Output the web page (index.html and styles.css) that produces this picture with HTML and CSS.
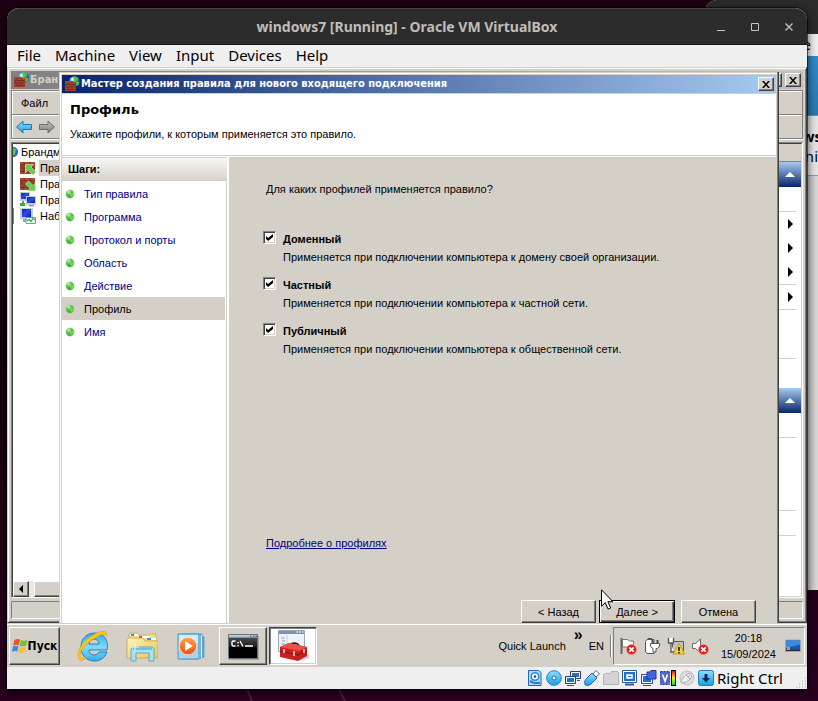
FILE: index.html
```html
<!DOCTYPE html>
<html lang="ru">
<head>
<meta charset="utf-8">
<title>windows7 [Running] - Oracle VM VirtualBox</title>
<link rel="stylesheet" href="styles.css">
</head>
<body>
<svg class="defs" aria-hidden="true">
  <defs>
    <radialGradient id="globe" cx=".35" cy=".3" r=".8"><stop offset="0" stop-color="#b8ecff"/><stop offset=".5" stop-color="#2484e0"/><stop offset="1" stop-color="#063a94"/></radialGradient>
    <radialGradient id="dot" cx=".35" cy=".25" r=".8"><stop offset="0" stop-color="#c8f4b8"/><stop offset=".45" stop-color="#50c03c"/><stop offset="1" stop-color="#2c9a28"/></radialGradient>
    <linearGradient id="screen" x1="0" y1="0" x2="1" y2="1"><stop offset="0" stop-color="#0c1cb0"/><stop offset=".5" stop-color="#2850e8"/><stop offset="1" stop-color="#0818a0"/></linearGradient>
    <linearGradient id="sky" x1="0" y1="0" x2="0" y2="1"><stop offset="0" stop-color="#8fe0fb"/><stop offset="1" stop-color="#1b9be8"/></linearGradient>
    <linearGradient id="ie" x1="0" y1="0" x2="0" y2="1"><stop offset="0" stop-color="#2eaae8"/><stop offset=".5" stop-color="#7fdcfc"/><stop offset="1" stop-color="#35aee9"/></linearGradient>
    <linearGradient id="folder" x1="0" y1="0" x2="1" y2="1"><stop offset="0" stop-color="#fff3b8"/><stop offset="1" stop-color="#e6c65c"/></linearGradient>
    <linearGradient id="orange" x1="0" y1="0" x2="0" y2="1"><stop offset="0" stop-color="#ffa04a"/><stop offset="1" stop-color="#e8500a"/></linearGradient>
    <linearGradient id="steel" x1="0" y1="0" x2="0" y2="1"><stop offset="0" stop-color="#c4c4c4"/><stop offset="1" stop-color="#7c7c7c"/></linearGradient>
    <linearGradient id="meter" x1="0" y1="0" x2="0" y2="1"><stop offset="0" stop-color="#f01010"/><stop offset=".5" stop-color="#f8f020"/><stop offset="1" stop-color="#18d030"/></linearGradient>
    <linearGradient id="console" x1="0" y1="0" x2="0" y2="1"><stop offset="0" stop-color="#5c5c5c"/><stop offset=".5" stop-color="#1c1c1c"/><stop offset=".55" stop-color="#000"/></linearGradient>
    <symbol id="firewall" viewBox="0 0 16 16">
      <circle cx="10.500" cy="5.500" r="5.300" fill="url(#globe)"/>
      <path d="M9 1c2-1 5 0 5 2l-3 3-2-2zM12 6l3.500 0-1 3-2 1z" fill="#55c436"/>
      <path d="M7 2.500l2-1 1 2-2 2z" fill="#e8fcff"/>
      <path d="M1 5h8v1h3v9H1z" fill="#a8442e"/>
      <path d="M1 8.500h11M1 11h11M1 13.500h11M4 6v2.500M8 6v2.500M2.500 8.500V11M6 8.500V11M10 8.500V11M4 11v2.500M8 11v2.500M6 13.500V15" stroke="#6c281c" stroke-width=".7"/>
    </symbol>
    <symbol id="brick" viewBox="0 0 16 16">
      <path d="M0 2h15v12H0z" fill="#ac4c34"/>
      <path d="M0 5h15M0 8h15M0 11h15M4 2v3M10 2v3M2 5v3M7 5v3M12 5v3M4 8v3M10 8v3M3 11v3M8 11v3" stroke="#6c2a1c" stroke-width=".8"/>
    </symbol>
    <symbol id="error" viewBox="0 0 10 10">
      <circle cx="5" cy="5" r="4.700" fill="#dc2626" stroke="#f4b0a8" stroke-width=".6"/>
      <path d="M3 3l4 4M7 3l-4 4" stroke="#fff" stroke-width="1.500"/>
    </symbol>
    <symbol id="bullet" viewBox="0 0 10 10"><circle cx="5" cy="5" r="4.200" fill="url(#dot)" stroke="#b8dcb0" stroke-width=".5"/><path d="M5 5l4-2v3L6 9z" fill="#86e060" opacity=".7"/></symbol>
    <symbol id="close" viewBox="0 0 8 7"><path d="M0 0h2l2 2.500L6 0h2L5 3.500 8 7H6L4 4.500 2 7H0l3-3.500z" fill="#000"/></symbol>
  </defs>
</svg>

<div class="other-window" aria-hidden="true">
  <div class="other-title"></div>
  <div class="other-menu">e</div>
  <div class="other-band"></div>
  <div class="other-text"><b>ws</b><span>ni</span></div>
  <div class="other-body"></div>
</div>
<svg class="streaks" viewBox="0 0 818 12" preserveAspectRatio="none" aria-hidden="true"><path d="M247 0l5 12M339 0l6 12" stroke="#5a1450" stroke-width="2"/></svg>

<div class="vm">
  <header class="vm-title">
    <h1>windows7 [Running] - Oracle VM VirtualBox</h1>
    <div class="vm-controls">
      <button type="button" aria-label="Minimize"><svg viewBox="0 0 10 10"><path d="M1 8.500h8" stroke="#c4c4c4"/></svg></button>
      <button type="button" aria-label="Maximize"><svg viewBox="0 0 10 10"><path d="M1.500 1.500h7v7h-7z" fill="none" stroke="#c4c4c4"/></svg></button>
      <button type="button" aria-label="Close"><svg viewBox="0 0 10 10"><path d="M1.500 1.500l7 7M8.500 1.500l-7 7" stroke="#c4c4c4" stroke-width="1.300"/></svg></button>
    </div>
  </header>
  <nav class="vm-menu">
    <button type="button">File</button><button type="button">Machine</button><button type="button">View</button><button type="button">Input</button><button type="button">Devices</button><button type="button">Help</button>
  </nav>

  <div class="guest">
    <div class="desktop">
      <section class="console">
        <div class="console-title"><svg class="i16"><use href="#firewall"/></svg><span>Бран</span>
          <span class="fill"></span>
          <button type="button" class="win-btn" aria-label="Развернуть"></button>
          <button type="button" class="win-btn" aria-label="Закрыть окно"><svg><use href="#close"/></svg></button>
        </div>
        <div class="bars">
          <div class="console-menu"><button type="button">Файл</button></div>
          <div class="console-tools">
            <button type="button" aria-label="Назад"><svg viewBox="0 0 16 16"><path d="M.5 8L7 2v3.500h8.500v5H7V14z" fill="url(#sky)" stroke="#2478a8"/></svg></button>
            <button type="button" aria-label="Вперёд"><svg viewBox="0 0 16 16"><path d="M15.500 8L9 2v3.500H.5v5H9V14z" fill="url(#steel)" stroke="#6c6c6c"/></svg></button>
          </div>
        </div>
        <div class="panes">
          <div class="tree">
            <ul>
              <li class="root"><svg viewBox="0 0 5 16"><path d="M0 3c3 0 5 2 5 5s-2 5-5 5z" fill="#1c70c8"/><path d="M0 4l3 1-1 5-2 2z" fill="#58c83c"/></svg><span>Брандм</span></li>
              <li class="current"><svg class="i16" viewBox="0 0 16 16"><use href="#brick" width="16" height="16"/><path d="M5.500 4.500h8L11 7l5 5-3 3-5-5-2.500 2.500z" fill="#62d048" stroke="#e0f8d8" stroke-width=".6"/></svg><span>Пра</span></li>
              <li><svg class="i16" viewBox="0 0 16 16"><use href="#brick" width="16" height="16"/><path d="M15.500 15h-8l2.500-2.500L5.500 8l3-3 4.500 4.500L15.500 7z" fill="#62d048" stroke="#e0f8d8" stroke-width=".6"/></svg><span>Пра</span></li>
              <li><svg class="i16" viewBox="0 0 16 16"><path d="M0 0h10v9H0z" fill="#c4ccd8"/><path d="M1 1h8v6H1z" fill="url(#screen)"/><path d="M6 4h10v9H6z" fill="#c4ccd8"/><path d="M7 5h8v6H7z" fill="url(#screen)"/><path d="M9 13h5v1.500H9z" fill="#8c98a8"/><path d="M0 11h5v3H0z" fill="#28b830"/><path d="M2 9h2v2H2z" fill="#889"/></svg><span>Пра</span></li>
              <li class="deep"><svg class="i16" viewBox="0 0 16 16"><path d="M0 0h13v11H0z" fill="#c4ccd8"/><path d="M2 1h9v8H2z" fill="url(#screen)"/><path d="M3 11h5v3H3z" fill="#98a4b4"/><path d="M6 9.500h9.500v6H6z" fill="#f4fff4" stroke="#6c98c8"/><path d="M7 13l2-1.500 2 2 2-3 2 1.500" fill="none" stroke="#28b830" stroke-width="1.200"/></svg><span>Наб</span></li>
            </ul>
            <div class="scroll"><button type="button" aria-label="Прокрутить влево"><svg viewBox="0 0 4 8"><path d="M4 0v8L0 4z"/></svg></button><i></i></div>
          </div>
          <div class="actions">
            <div class="actions-head"></div>
            <div class="section"><svg viewBox="0 0 10 5"><path d="M0 5l5-5 5 5z" fill="#fff"/></svg></div>
            <div class="cell gap24"></div>
            <div class="group"><div class="arrow"></div><div class="arrow"></div><div class="arrow"></div></div>
            <div class="group"><div class="arrow"></div></div>
            <div class="cell gap48"></div>
            <div class="spacer"></div>
            <div class="section"><svg viewBox="0 0 10 5"><path d="M0 5l5-5 5 5z" fill="#fff"/></svg></div>
            <div class="cell gap24"></div>
            <div class="cell gap72"></div>
            <div class="cell gap24"></div>
          </div>
        </div>
        <div class="console-status"></div>
      </section>

      <section class="wizard" role="dialog" aria-labelledby="wizard-name">
        <div class="wizard-title"><svg class="i16"><use href="#firewall"/></svg><span id="wizard-name">Мастер создания правила для нового входящего подключения</span><span class="fill"></span><button type="button" class="win-btn" aria-label="Закрыть"><svg><use href="#close"/></svg></button></div>
        <header class="wizard-head"><h2>Профиль</h2><p>Укажите профили, к которым применяется это правило.</p></header>
        <div class="wizard-body">
          <aside class="steps">
            <h3>Шаги:</h3>
            <ol>
              <li><svg><use href="#bullet"/></svg><a href="#">Тип правила</a></li>
              <li><svg><use href="#bullet"/></svg><a href="#">Программа</a></li>
              <li><svg><use href="#bullet"/></svg><a href="#">Протокол и порты</a></li>
              <li><svg><use href="#bullet"/></svg><a href="#">Область</a></li>
              <li><svg><use href="#bullet"/></svg><a href="#">Действие</a></li>
              <li class="active"><svg><use href="#bullet"/></svg><a href="#">Профиль</a></li>
              <li><svg><use href="#bullet"/></svg><a href="#">Имя</a></li>
            </ol>
          </aside>
          <form class="page">
            <p class="question">Для каких профилей применяется правило?</p>
            <div class="options">
              <div class="option"><input type="checkbox" id="domain" checked><label for="domain">Доменный</label><p>Применяется при подключении компьютера к домену своей организации.</p></div>
              <div class="option"><input type="checkbox" id="private" checked><label for="private">Частный</label><p>Применяется при подключении компьютера к частной сети.</p></div>
              <div class="option"><input type="checkbox" id="public" checked><label for="public">Публичный</label><p>Применяется при подключении компьютера к общественной сети.</p></div>
            </div>
            <a class="more" href="#">Подробнее о профилях</a>
            <div class="buttons"><button type="button">&lt; Назад</button><button type="button" class="default">Далее &gt;</button><button type="button" class="cancel">Отмена</button></div>
          </form>
        </div>
      </section>
      <svg class="cursor" viewBox="0 0 12 21" aria-hidden="true"><path d="M.5.8v16.400l3.800-3.600 2.800 6.500 2.600-1.100-2.800-6.300h5z" fill="#fff" stroke="#000"/></svg>
    </div>

    <footer class="taskbar">
      <button type="button" class="task start"><svg viewBox="0 0 16 16"><path d="M2.500 2c2-1.500 4-1.200 5.500-.4L6.800 7.300C5 6.500 3 6.500 1 7.600z" fill="#e8542c"/><path d="M8.800 2c2 1 4.200 1 6.700 0L14 7.700c-2 1-4.500.8-6.500-.2z" fill="#7cc02c"/><path d="M.8 8.500c2-1.200 4-1 5.700-.2L5.300 13.500c-2-.9-3.500-.8-5.300.3z" fill="#3c8ce0"/><path d="M7.300 8.700c2 1 4 1 6.500 0l-1.500 5.500c-2 1-4 .8-6-.2z" fill="#f8c42c"/></svg><span>Пуск</span></button>
      <div class="quick">
        <button type="button" aria-label="Internet Explorer"><svg viewBox="0 0 32 32"><path d="M30 20H12c0 5 7 7 10 2h8c-2 6-7 9-12 9C9 31 4 25 4 17 4 8 10 3 18 3c9 0 14 7 12 17zM12 14h10c0-6-9-7-10 0z" fill="url(#ie)" stroke="#1c78b8" stroke-width=".9"/><path d="M3 30C-3 25 5 11 16 5 24 0 31 0 30 6c-1-3-6-2-12 2C8 14 1 23 4 27c1 2 4 1 6 0-2 3-5 4-7 3z" fill="#fcc418" stroke="#d89808" stroke-width=".5"/></svg></button>
        <button type="button" aria-label="Проводник"><svg viewBox="0 0 32 32"><path d="M3 5l1-2h8l1 2h8l1-1h8v10H3z" fill="#f6df86" stroke="#c8a448" stroke-width=".7"/><path d="M4 4h8v2H4zM13 6h10v2H13zM22 8h8v2h-8z" fill="#fff"/><path d="M5 4h3v2H5z" fill="#18b828"/><path d="M13 6h3v2h-3z" fill="#e04830"/><path d="M21 8h4v2h-4z" fill="#2098e8"/><path d="M1 8h16l2 3h13v17H1z" fill="url(#folder)" stroke="#c8a448" stroke-width=".8"/><path d="M5 31V20c0-2 2-3 3-3h17c2 0 3 1 3 3v11h-5v-8H10v8z" fill="#a8e0f4" stroke="#5ca8c8"/><path d="M7 18h19v2H7z" fill="#6cc0e4"/><path d="M9 13v8M5 17h8" stroke="#fff" stroke-width=".8"/></svg></button>
        <button type="button" aria-label="Проигрыватель"><svg viewBox="0 0 32 32"><path d="M7 4h20v23l-4 2H7zM26 6l3 1v20l-4 1" fill="#70b4d8" stroke="#3c88b8" stroke-width=".7"/><path d="M24 5v24M26.500 5v23" stroke="#d8f0fc"/><path d="M3 4h21v25H3z" fill="#a8d4ec" stroke="#4c94bc"/><path d="M4 5h19v8L4 20z" fill="#d0ecf8"/><circle cx="13" cy="16" r="8.700" fill="url(#orange)" stroke="#fff" stroke-width=".6"/><path d="M10 11v10l8-5z" fill="#fff"/></svg></button>
      </div>
      <div class="running">
        <button type="button" class="task" aria-label="Командная строка"><svg viewBox="0 0 32 32"><path d="M2 6h30v24H2z" fill="#888" opacity=".6"/><path d="M1.500 4.500h29v24h-29z" fill="url(#console)" stroke="#687480"/><path d="M2 5h28v2.500H2z" fill="#b8c8dc"/><path d="M23 5.500h1.500V7H23zM26 5.500h1.500V7H26zM28.500 5.500H30V7h-1.500z" fill="#4474a8"/><path d="M8.500 11H6l-1 1v3l1 1h2.500M11 12v1.500M11 15v1.500M13 11l3 5.500M18 16h8" fill="none" stroke="#fff" stroke-width="1.400"/></svg></button>
        <button type="button" class="task pressed" aria-label="Консоль управления"><svg viewBox="0 0 32 32"><path d="M1.500.5h26v21h-26z" fill="#f0f4fa" stroke="#98a8b8"/><path d="M2 1h25v3H2z" fill="#8090b0"/><path d="M19 2h2M22 2h2M25 2h1.500" stroke="#fff"/><path d="M4 8h4M5 11h3M4 14h4M5 17h3" stroke="#90a0b8"/><path d="M10 5v13" stroke="#c0ccd8"/><path d="M22 31l10-3v-4z" fill="#aaa" opacity=".6"/><path d="M13 16c0-4 9-4 9 1" fill="none" stroke="#222" stroke-width="1.600"/><path d="M3 17l9-4 18 4v9l-9 5-18-4z" fill="#c82020"/><path d="M3 17l9-4 18 4-8 4z" fill="#ec5046"/><path d="M3 21l18 4 9-4" fill="none" stroke="#8c0c10"/><path d="M7 19v4M17 21v5M27 19v4" stroke="#e8d8d8" stroke-width="1.500"/></svg></button>
      </div>
      <span class="fill"></span>
      <div class="launch"><span>Quick Launch</span><b>»</b></div>
      <span class="lang">EN</span>
      <div class="tray">
        <svg class="i18" viewBox="0 0 18 18"><path d="M2.500 1v16" stroke="#666" stroke-width="2"/><path d="M3.500 2.500h5l2 1.500h4v7h-5l-1.500-1h-4.500z" fill="#fff" stroke="#777"/><use href="#error" x="7" y="7" width="11" height="11"/></svg>
        <svg class="i18" viewBox="0 0 18 18"><path d="M4 2.500h7v14H4l-1.500-2v-10z" fill="#fff" stroke="#555"/><path d="M5 2h4" stroke="#555" stroke-width="2"/><path d="M9.500 3v4M14.500 3v4" stroke="#444" stroke-width="2"/><path d="M7.500 6.500h9V9l-2 2.500h-1.500V15H10v-3.500l-2.500-2z" fill="#fff" stroke="#555"/></svg>
        <svg class="i18" viewBox="0 0 18 18"><path d="M5.500 4.500h11v10h-11z" fill="#c4c4c4" stroke="#555"/><path d="M1.500 1v5h5V1M4 6v9h3" fill="#fff" stroke="#555" stroke-width="1.300"/><path d="M12 6.500l6 10.500H6z" fill="#fcd428" stroke="#a88808" stroke-width=".7"/><path d="M12 10v4M12 15v1.500" stroke="#000" stroke-width="1.400"/></svg>
        <svg class="i18" viewBox="0 0 18 18"><path d="M1.500 6.500h3L9.500 2v14l-5-4.500h-3z" fill="#fff" stroke="#666"/><use href="#error" x="7" y="7" width="11" height="11"/></svg>
        <div class="clock"><time>20:18</time><time>15/09/2024</time></div>
        <svg class="i16" viewBox="0 0 16 16"><path d="M.5 2h15v11.500H.5z" fill="#1858b0" stroke="#98a8b8"/><path d="M1 2.500h14v4L1 10z" fill="#3c8cd8"/><path d="M1 11.500h14V13H1z" fill="#283040"/><path d="M2 9h3v3H2z" fill="#38c8e0"/><path d="M3 10h1v1H3z" fill="#f07828"/></svg>
      </div>
    </footer>
  </div>

  <footer class="vm-status">
    <svg viewBox="0 0 16 16"><path d="M1.500.5h10l2.500 2v13H1.500z" fill="#a8dcfc" stroke="#2464b0"/><circle cx="8" cy="6.500" r="3.800" fill="#fff" stroke="#2c88d8" stroke-width="1.500"/><circle cx="8" cy="6.500" r="1.300" fill="#1450a0"/><path d="M3 11l4 2h6" fill="none" stroke="#2c7cc8" stroke-width="2"/></svg>
    <svg viewBox="0 0 16 16"><circle cx="8" cy="8" r="7.300" fill="url(#sky)" stroke="#2080c8"/><circle cx="8" cy="8" r="2" fill="#fff" stroke="#2070b0"/></svg>
    <svg viewBox="0 0 16 16"><path d="M5.500 1.500h10v7h-10z" fill="#2070d0" stroke="#345"/><path d="M6.500 2.500h8v5h-8z" fill="none" stroke="#fff"/><path d="M.5 6.500h10v7H.5z" fill="#2070d0" stroke="#345"/><path d="M1.500 7.500h8v5h-8z" fill="none" stroke="#fff"/><path d="M2 15.500h7M12 10.500h3" stroke="#456"/></svg>
    <svg viewBox="0 0 16 16"><path d="M9 4l3-3.500 3.500 3.500L12 7z" fill="#fff" stroke="#668"/><path d="M8 3l5 5-6 6c-3 2-6 2-6 0-1-2 0-4 2-6z" fill="url(#sky)" stroke="#2864a8"/></svg>
    <svg viewBox="0 0 16 16"><path d="M.5 4.500l2-1h5l1-2h6l1 1v12H.5z" fill="#d4d4d4" stroke="#b4b4b4"/></svg>
    <svg viewBox="0 0 16 16"><path d="M.5.500h14v12h-14z" fill="#fff" stroke="#345888"/><path d="M2 2h11v9H2z" fill="#2070d0"/><path d="M4.500 4.500h6v4h-6z" fill="#fff" stroke="#cfe4ff"/><path d="M6 6h3v1H6z" fill="#2070d0"/><path d="M3 14.500h9" stroke="#345888" stroke-width="2"/></svg>
    <svg viewBox="0 0 16 16"><path d="M.5 4.500h11v9H.5z" fill="#2070d0" stroke="#345888"/><path d="M1.500 5.500h9v7h-9z" fill="none" stroke="#fff"/><path d="M6 2h3l1-1.500h5V9H6z" fill="#4464d8" stroke="#2038a0"/><path d="M2 15.500h8" stroke="#345888"/></svg>
    <svg viewBox="0 0 16 16"><path d="M.5 1.500h9v13h-9z" fill="#5068c8" stroke="#2840a0" stroke-dasharray="2 1"/><path d="M2.500 4.500L5 11l2.500-6.500" fill="none" stroke="#fff" stroke-width="1.600"/><path d="M11 0h5v16h-5z" fill="#000"/><path d="M12 1h3v14h-3z" fill="url(#meter)"/></svg>
    <svg viewBox="0 0 16 16"><circle cx="8" cy="8" r="7" fill="#dedede" stroke="#bcbcbc"/><path d="M2 13c0-3 3-7 6-9 3-2 6 1 4 4-2 3-6 5-10 5z" fill="#eee" stroke="#aaa"/><path d="M7 5l4 4M9 7l2-2" stroke="#aaa"/></svg>
    <svg viewBox="0 0 16 16"><rect x=".5" y=".5" width="15" height="15" rx="2" fill="url(#sky)" stroke="#2878b8"/><path d="M6.500 4h3v4H12l-4 4.500L4 8h2.500z" fill="#0c2c58"/></svg>
    <span>Right Ctrl</span>
    <svg class="grip" viewBox="0 0 12 12"><path d="M10 1h1M7 4h1M10 4h1M4 7h1M7 7h1M10 7h1M1 10h1M4 10h1M7 10h1M10 10h1" stroke="#aaa"/></svg>
  </footer>
</div>
</body>
</html>
```
FILE: styles.css
```css
* { box-sizing: border-box; }

body {
  margin: 0;
  min-height: 100vh;
  display: flex;
  padding: 8px 11px 12px 7px;
  overflow: hidden;
  background: linear-gradient(#1c0014, #14000f 50%, #2a0020);
  font-family: "Liberation Sans", Arial, sans-serif;
  font-size: 11px;
  line-height: 14px;
  color: #000;
}

h1, h2, h3, p, ul, ol { margin: 0; padding: 0; font-size: inherit; }
ul, ol { list-style: none; }
button { font: inherit; color: inherit; border: 0; padding: 0; background: none; }
svg { display: block; flex: none; }
.defs { position: absolute; width: 0; height: 0; }
.fill { flex: 1; }
.i16 { width: 16px; height: 16px; }
.i18 { width: 18px; height: 18px; }

/* Window behind, at the right edge of the host desktop */
.other-window {
  position: absolute;
  top: 0;
  right: 0;
  width: 113px;
  height: 590px;
  display: flex;
  flex-direction: column;
  background: #d0d0d0;
  border-radius: 12px 0 0 0;
  overflow: hidden;
  text-align: right;
  font: 15px/20px "Noto Sans", sans-serif;
}
.other-title { height: 34px; background: #2b2b2b; }
.other-menu { height: 22px; padding-right: 7px; background: #eee; }
.other-band { height: 60px; background: linear-gradient(#2f8bc8, #2878b0); border-bottom: 1px solid #888; }
.other-text { height: 60px; padding-top: 10px; background: #e4e4e4; border-bottom: 1px solid #999; display: flex; flex-direction: column; }
.other-text b { margin-right: -4px; }
.other-body { flex: 1; background: linear-gradient(to left, #d8d8d8, #c0c0c0 12px); }
.streaks { position: absolute; left: 0; bottom: 0; width: 100%; height: 12px; }

/* Host window */
.vm {
  position: relative;
  flex: 1;
  min-width: 0;
  display: flex;
  flex-direction: column;
  border-radius: 12px 12px 0 0;
  background: #efefef;
  box-shadow: 0 0 0 1px #0008, 0 3px 10px #000c;
}
.vm-title {
  height: 37px;
  display: grid;
  grid-template-columns: 1fr auto 1fr;
  align-items: center;
  border-radius: 12px 12px 0 0;
  background: #2c2c2c;
  border-top: 1px solid #444;
  border-bottom: 1px solid #161616;
  color: #c0bdb8;
}
.vm-title h1 { grid-column: 2; font: bold 14px/20px "Noto Sans", sans-serif; }
.vm-controls { justify-self: end; display: flex; gap: 24px; padding-right: 13px; }
.vm-controls svg { width: 10px; height: 10px; }
.vm-menu { height: 22px; display: flex; align-items: flex-start; gap: 14px; padding: 0 10px; font: 15px/20px "Noto Sans", sans-serif; }

.guest { flex: 1; display: flex; flex-direction: column; background: #d4d0c8; }
.desktop { position: relative; flex: 1; display: flex; }

/* Firewall console */
.console {
  flex: 1;
  display: flex;
  flex-direction: column;
  padding: 3px;
  background: #d4d0c8;
  border: 1px solid;
  border-color: #d4d0c8 #404040 #404040 #d4d0c8;
  box-shadow: inset 1px 1px #fff, inset -1px -1px #808080;
}
.console-title {
  height: 18px;
  display: flex;
  align-items: center;
  gap: 1px;
  padding: 0 2px;
  background: linear-gradient(to right, #808080, #c0c0c0);
  color: #d4d0c8;
  font: bold 11px/16px "DejaVu Sans Condensed", sans-serif;
}
.win-btn {
  width: 16px;
  height: 14px;
  display: grid;
  place-items: center;
  background: #d4d0c8;
  border: 1px solid;
  border-color: #fff #404040 #404040 #fff;
  box-shadow: inset -1px -1px #808080;
}
.console .win-btn + .win-btn { margin-left: 2px; }
.win-btn svg { width: 8px; height: 7px; }
.bars { margin-top: 1px; border: 1px solid #808080; box-shadow: inset 1px 1px #fff, 0 1px #fff; }
.console-menu { height: 24px; padding: 1px 9px; border-bottom: 1px solid #808080; }
.console-menu button { line-height: 22px; }
.console-tools { height: 23px; display: flex; gap: 7px; padding: 0 4px; align-items: center; box-shadow: inset 0 1px #fff; }
.console-tools svg { width: 16px; height: 16px; }
.panes {
  flex: 1;
  display: flex;
  margin-top: 3px;
  border: 1px solid;
  border-color: #808080 #fff #fff #808080;
}
.tree { flex: 1; display: flex; flex-direction: column; background: #fff; border: solid #404040; border-width: 1px 0 0 1px; }
.tree ul { flex: 1; }
.tree li { height: 16px; display: flex; align-items: center; gap: 3px; padding-left: 7px; }
.tree li span { padding: 0 1px; line-height: 16px; }
.tree .root { padding-left: 0; gap: 2px; }
.tree .root svg { width: 5px; height: 16px; }
.tree .current span { background: #d4d0c8; }
.tree .deep { box-shadow: inset 1px 0 #808080; }
.scroll { height: 16px; display: flex; gap: 5px; background: #ebe9e4; }
.scroll button { width: 16px; display: grid; place-items: center; }
.scroll button svg { width: 4px; height: 8px; }
.scroll button, .scroll i { background: #d4d0c8; border: 1px solid; border-color: #fff #404040 #404040 #fff; box-shadow: inset -1px -1px #808080; }
.scroll i { flex: 1; }
.actions { width: 200px; display: flex; flex-direction: column; background: #fff; border: solid #d4d0c8; border-width: 0 1px 1px 0; border-top: 1px solid #404040; }
.actions-head { height: 18px; background: #d4d0c8; border-bottom: 1px solid #808080; }
.section { height: 25px; display: flex; align-items: center; justify-content: flex-end; padding-right: 6px; background: linear-gradient(#a6caf0, #0a246a); }
.section svg { width: 10px; height: 5px; }
.cell, .group { margin-right: 5px; border-bottom: 1px solid #d4d0c8; }
.gap24 { height: 25px; }
.gap48 { height: 49px; }
.gap72 { height: 73px; }
.spacer { height: 29px; }
.arrow { height: 24px; display: flex; justify-content: flex-end; align-items: center; padding-right: 3px; }
.arrow::after { content: ""; border: 5px solid transparent; border-left-color: #000; border-right: 0; }
.console-status { height: 18px; margin-top: 3px; border: 1px solid; border-color: #808080 #fff #fff #808080; }

/* Wizard */
.wizard {
  position: absolute;
  inset: 5px 28px 0 52px;
  display: flex;
  flex-direction: column;
  padding: 3px 3px 0;
  background: #d4d0c8;
  box-shadow: inset -1px 0 #404040, inset -2px 0 #808080, inset 0 1px #d4d0c8, inset 1px 0 #d4d0c8, inset 2px 2px #fff;
}
.wizard-title {
  height: 18px;
  display: flex;
  align-items: center;
  gap: 1px;
  padding: 0 2px;
  background: linear-gradient(to right, #0a246a, #a6caf0);
  color: #fff;
  font: bold 11px/16px "DejaVu Sans Condensed", sans-serif;
}
.wizard-head { height: 62px; margin-top: 1px; padding: 8px; background: #fff; border-bottom: 1px solid #d4d0c8; box-shadow: 0 1px #fff; }
.wizard-head h2 { font: bold 13px/16px "DejaVu Sans", sans-serif; }
.wizard-head p { margin-top: 9px; }
.wizard-body { flex: 1; display: flex; margin-top: 1px; }
.steps { width: 167px; background: #fff; border-right: 2px solid #fff; }
.steps h3 { height: 24px; padding: 0 6px; line-height: 22px; background: linear-gradient(#f8f8f6, #d4d0c8); border-top: 1px solid #d4d0c8; }
.steps ol { padding-top: 1px; border-right: 1px solid #d4d0c8; height: calc(100% - 24px); }
.steps li { height: 23px; display: flex; align-items: center; gap: 9px; padding-left: 3px; margin-right: 1px; }
.steps li svg { width: 10px; height: 10px; }
.steps a { color: #000080; text-decoration: none; }
.steps .active { background: #d4d0c8; }
.steps .active a { color: #000; }
.page { flex: 1; display: flex; flex-direction: column; padding: 25px 20px 0 34px; }
.question { padding-left: 3px; }
.options { display: grid; gap: 13px; margin-top: 35px; }
.option { display: grid; grid-template-columns: 13px 1fr; column-gap: 7px; row-gap: 4px; }
.option input {
  appearance: none;
  width: 13px;
  height: 13px;
  margin: 0;
  background: #fff;
  border: 1px solid;
  border-color: #808080 #fff #fff #808080;
  box-shadow: inset 1px 1px #404040, inset -1px -1px #d4d0c8;
}
.option input:checked::before {
  content: "";
  display: block;
  width: 7px;
  height: 7px;
  margin: 2px;
  background: #000;
  clip-path: polygon(0 29%, 29% 57%, 100% 0, 100% 43%, 29% 100%, 0 72%);
}
.option label { padding-top: 1px; font-weight: bold; }
.option p { grid-column: 2; }
.more { align-self: flex-start; margin: auto 0 50px 3px; color: #000080; }
.buttons { display: flex; justify-content: flex-end; gap: 3px; }
.buttons button { width: 75px; height: 23px; background: #d4d0c8; border: 1px solid; border-color: #fff #404040 #404040 #fff; box-shadow: inset -1px -1px #808080; }
.buttons .default { width: 76px; border-color: #000; box-shadow: inset 1px 1px #fff, inset -1px -1px #404040, inset -2px -2px #808080; }
.buttons .cancel { margin-left: 3px; }
.cursor { position: absolute; left: 594px; top: 522px; width: 12px; height: 21px; }

/* Guest taskbar */
.taskbar { height: 44px; display: flex; align-items: center; padding: 2px 2px 0; box-shadow: inset 0 1px #d4d0c8, inset 0 2px #fff; }
.task { width: 48px; height: 38px; display: grid; place-items: center; border: 1px solid; border-color: #fff #404040 #404040 #fff; box-shadow: inset -1px -1px #808080; }
.task svg { width: 32px; height: 32px; }
.task.start { width: 51px; display: flex; align-items: center; justify-content: center; font: bold 12px/16px "DejaVu Sans Condensed", sans-serif; }
.task.start svg { width: 16px; height: 16px; }
.task.pressed { background: #fff; border-color: #404040 #fff #fff #404040; box-shadow: inset 1px 1px #808080, inset -1px -1px #d4d0c8; }
.quick { display: flex; gap: 17px; margin-left: 17px; }
.quick svg { width: 32px; height: 32px; }
.running { display: flex; gap: 2px; margin-left: 12px; }
.launch { display: flex; gap: 8px; }
.launch b { font: bold 16px/16px "Liberation Sans", sans-serif; align-self: flex-start; margin-top: -12px; }
.lang { padding: 4px 6px; margin-right: 2px; border-right: 1px solid #808080; box-shadow: 1px 0 #fff; }
.tray { height: 38px; display: flex; align-items: center; gap: 6px; padding: 0 3px 0 5px; border: 1px solid; border-color: #808080 #fff #fff #808080; }
.clock { display: grid; gap: 2px; padding: 0 3px 0 6px; text-align: center; }

/* Host status bar */
.vm-status { height: 22px; display: flex; align-items: center; justify-content: flex-end; gap: 3px; font: 15px/22px "Noto Sans", sans-serif; }
.vm-status svg { width: 16px; height: 16px; }
.vm-status .grip { width: 12px; height: 12px; margin-left: 9px; align-self: flex-end; }
```
